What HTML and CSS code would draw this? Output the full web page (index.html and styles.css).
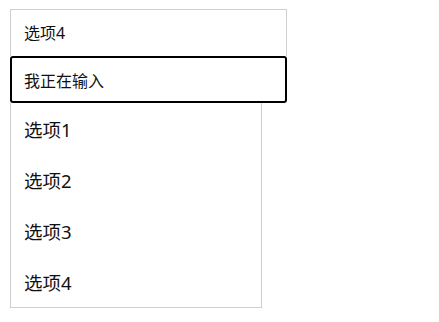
FILE: index.html
```html
<!DOCTYPE html>
<html lang="zh-CN">
<head>
<meta charset="utf-8">
<title>Select</title>
<link rel="stylesheet" href="styles.css">
</head>
<body>
<div class="wrap">
  <div class="select">选项4</div>
  <div class="dropdown">
    <input class="search" type="text" value="我正在输入">
    <ul class="options">
      <li>选项1</li>
      <li>选项2</li>
      <li>选项3</li>
      <li>选项4</li>
    </ul>
  </div>
</div>
</body>
</html>
```

FILE: styles.css
```css
html, body {
  margin: 0;
  padding: 0;
  background: #fff;
}
body {
  font-family: "Noto Sans", "Noto Sans CJK SC", sans-serif;
  color: #111;
}
.wrap {
  padding: 9px 0 14px 10px;
}
.select {
  box-sizing: border-box;
  width: 277px;
  height: 47px;
  border: 1px solid #cfcfcf;
  border-bottom: none;
  padding-left: 13px;
  font-size: 16px;
  line-height: 46px;
}
.dropdown {
  width: 277px;
}
.search {
  display: block;
  box-sizing: border-box;
  width: 277px;
  height: 47px;
  margin: 0;
  border: 2px solid #000;
  border-radius: 3px;
  padding: 0 0 0 12px;
  font-family: inherit;
  font-size: 16px;
  color: #111;
  outline: none;
  background: #fff;
}
.options {
  list-style: none;
  margin: 0;
  padding: 0;
  box-sizing: border-box;
  width: 252px;
  border: 1px solid #cfcfcf;
  border-top: none;
  background: #fff;
}
.options li {
  height: 51px;
  line-height: 53px;
  padding-left: 13px;
  font-size: 18.5px;
}
```
